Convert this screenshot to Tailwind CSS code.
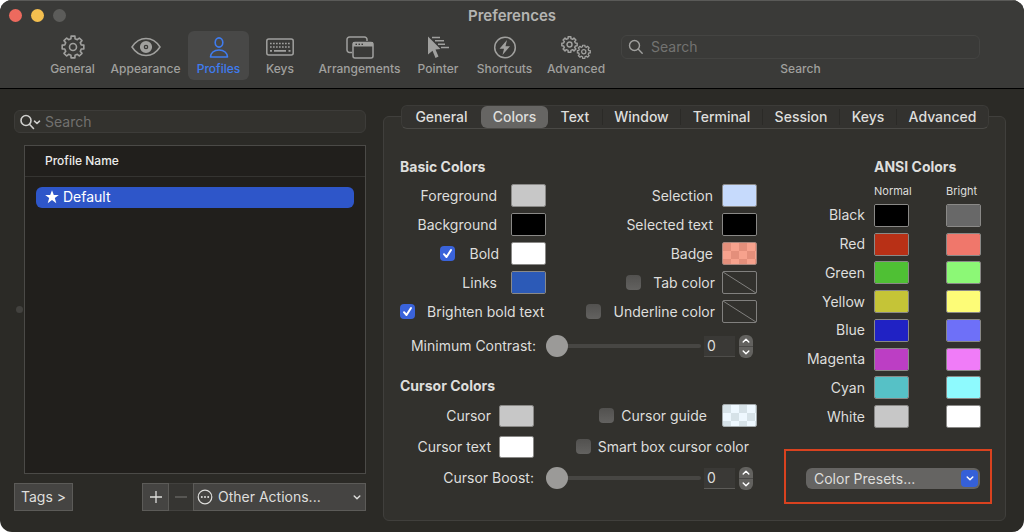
<!DOCTYPE html>
<html lang="en">
<head>
  <meta charset="UTF-8" />
  <meta name="viewport" content="width=device-width, initial-scale=1.0"/>
  <title>Preferences</title>
  <script src="https://cdn.jsdelivr.net/npm/@tailwindcss/browser@4"></script>
</head>
<body class="bg-white font-['Inter',sans-serif] text-sm text-[#dededc]">

  <!-- Shared icons -->
  <svg class="hidden">
    <symbol id="gear" viewBox="0 0 24 24">
      <path fill="none" stroke="currentColor" stroke-linejoin="round" d="M20.25 9.94L22.83 10.09V13.91L20.25 14.06L19.29 16.38L21.01 18.31L18.31 21.01L16.38 19.29L14.06 20.25L13.91 22.83H10.09L9.94 20.25L7.62 19.29L5.69 21.01L2.99 18.31L4.71 16.38L3.75 14.06L1.17 13.91V10.09L3.75 9.94L4.71 7.62L2.99 5.69L5.69 2.99L7.62 4.71L9.94 3.75L10.09 1.17H13.91L14.06 3.75L16.38 4.71L18.31 2.99L21.01 5.69L19.29 7.62Z"/>
      <circle cx="12" cy="12" r="3.5" fill="none" stroke="currentColor"/>
    </symbol>
    <symbol id="check" viewBox="0 0 15 15">
      <path fill="none" stroke="#fff" stroke-width="2" stroke-linecap="round" stroke-linejoin="round" d="M4 8.2L6.5 11L11 4"/>
    </symbol>
    <symbol id="chevron" viewBox="0 0 10 6">
      <path fill="none" stroke="currentColor" stroke-width="1.8" stroke-linecap="round" stroke-linejoin="round" d="M1.5 1.2L5 4.6L8.5 1.2"/>
    </symbol>
  </svg>

  <div class="flex min-h-screen flex-col overflow-hidden rounded-xl bg-[#2b2a26]">

    <!-- Title bar and toolbar -->
    <header class="border-b border-black border-t border-t-[#5a5a58] bg-[#3a3a38] pb-2 text-[#a0a09e]">
      <div class="relative flex h-[30px] items-center justify-center">
        <div class="absolute left-[9px] top-2 flex gap-[9px]">
          <button aria-label="Close" class="size-[13px] rounded-full bg-[#ed6a5e]"></button>
          <button aria-label="Minimize" class="size-[13px] rounded-full bg-[#f4bf4f]"></button>
          <button aria-label="Zoom" class="size-[13px] rounded-full bg-[#5c5c5a]"></button>
        </div>
        <h1 class="text-[15px] font-semibold text-[#b4b4b2]">Preferences</h1>
      </div>

      <div class="grid grid-cols-[61px_85px_61px_62px_97px_60px_73px_70px_1fr] pl-[42px] pr-11 text-xs font-medium">
        <button class="flex h-[49px] flex-col items-center pt-1">
          <svg class="size-6" stroke-width="1.6"><use href="#gear"/></svg>
          <span class="mt-0.5">General</span>
        </button>
        <button class="flex h-[49px] flex-col items-center pt-1">
          <svg class="h-6 w-[30px]" viewBox="0 0 30 24" fill="none" stroke="currentColor" stroke-width="1.5">
            <path d="M1 12C4.500 6.500 9.500 3.500 15 3.500S25.500 6.500 29 12C25.500 17.500 20.500 20.500 15 20.500S4.500 17.500 1 12Z"/>
            <circle cx="15" cy="12" r="4.200" stroke-width="3.800"/>
            <circle cx="15" cy="12" r="1" fill="currentColor" stroke="none"/>
          </svg>
          <span class="mt-0.5">Appearance</span>
        </button>
        <button class="flex h-[49px] flex-col items-center rounded-md bg-[#484847] pt-1 text-[#3f7cf0]" aria-current="page">
          <svg class="size-6" viewBox="0 0 24 24" fill="none" stroke="currentColor" stroke-width="1.6">
            <ellipse cx="12" cy="7.500" rx="3.800" ry="4.600"/>
            <path stroke-linejoin="round" d="M3.500 22C3.500 18 7 15 12 15S20.500 18 20.500 22Z"/>
          </svg>
          <span class="mt-0.5">Profiles</span>
        </button>
        <button class="flex h-[49px] flex-col items-center pt-1">
          <svg class="h-6 w-[28px]" viewBox="0 0 28 24" fill="none" stroke="currentColor" stroke-width="1.5">
            <rect x="0.800" y="4" width="26.400" height="16" rx="2"/>
            <path stroke-width="1.700" stroke-dasharray="1.700 1.300" d="M4 8.500H24.500M4 12H24.500"/>
            <path stroke-width="1.700" d="M4 15.800H6M8 15.800H20M22.500 15.800H24.500"/>
          </svg>
          <span class="mt-0.5">Keys</span>
        </button>
        <button class="flex h-[49px] flex-col items-center pt-1">
          <svg class="h-6 w-[28px]" viewBox="0 0 28 24" fill="none" stroke="currentColor" stroke-width="1.5">
            <path d="M6 17.500H3.500A2.500 2.500 0 0 1 1 15V4.500A2.500 2.500 0 0 1 3.500 2H18.500A2.500 2.500 0 0 1 21 4.500V6"/>
            <rect x="7" y="7.500" width="20" height="15.500" rx="2"/>
            <path fill="currentColor" stroke="none" fill-rule="evenodd" d="M7 7H27V11.500H7ZM9.500 8.500V10H11V8.500ZM12.500 8.500V10H14V8.500ZM15.500 8.500V10H17V8.500Z"/>
          </svg>
          <span class="mt-0.5">Arrangements</span>
        </button>
        <button class="flex h-[49px] flex-col items-center pt-1">
          <svg class="h-6 w-[24px]" viewBox="0 0 24 24" fill="currentColor">
            <path d="M2 1.500L14.500 14L9.500 14.500L12.500 21.500L9.500 23L6.500 15.800L2 19.500Z"/>
            <path fill="none" stroke="currentColor" stroke-width="1.500" d="M6 2.500H14M9 5.800H18M12 9.200H19M15 12.500H23"/>
          </svg>
          <span class="mt-0.5">Pointer</span>
        </button>
        <button class="flex h-[49px] flex-col items-center pt-1">
          <svg class="size-6" viewBox="0 0 24 24" fill="none" stroke="currentColor" stroke-width="1.5">
            <circle cx="12" cy="12.500" r="10.300"/>
            <path fill="currentColor" stroke="none" d="M14 5L6.500 13.700H11L9.500 20L17 11.300H12.500Z"/>
          </svg>
          <span class="mt-0.5">Shortcuts</span>
        </button>
        <button class="flex h-[49px] flex-col items-center pt-1">
          <svg class="h-6 w-[32px]" viewBox="0 0 32 24" stroke-width="2.1">
            <use href="#gear" x="1" y="1" width="17" height="17"/>
            <use href="#gear" x="16.500" y="9.500" width="14.500" height="14.500"/>
          </svg>
          <span class="mt-0.5">Advanced</span>
        </button>

        <div class="flex flex-col items-center pl-[10px] pt-1">
          <div class="flex h-6 w-full items-center gap-[7px] rounded-md border border-[#444442] px-1.5">
            <svg class="size-4 shrink-0" viewBox="0 0 16 16" fill="none" stroke="currentColor" stroke-width="1.4" stroke-linecap="round">
              <circle cx="6.500" cy="6.500" r="5"/><path d="M10.300 10.300L14.200 14.200"/>
            </svg>
            <input id="prefSearch" type="search" placeholder="Search" class="w-full bg-transparent text-sm font-normal outline-none placeholder:text-[#737371]" />
          </div>
          <label for="prefSearch" class="mt-0.5">Search</label>
        </div>
      </div>
    </header>

    <main class="flex flex-1 gap-[17px] pb-[11px] pl-[14px] pr-[18px]">

      <!-- Profile list -->
      <section class="relative flex w-[352px] shrink-0 flex-col pt-[21px]">
        <div class="flex h-[23px] items-center rounded-md border border-[#3d3c39] bg-[#33322e] px-1">
          <svg class="h-4 w-[22px] shrink-0 text-[#cfcfcd]" viewBox="0 0 22 16" fill="none" stroke="currentColor" stroke-width="1.6" stroke-linecap="round" stroke-linejoin="round">
            <circle cx="7" cy="6.500" r="5"/><path d="M10.700 10.500L14.500 14.500M15.500 7.200L18 9.500L20.500 7.200"/>
          </svg>
          <input type="search" aria-label="Search profiles" placeholder="Search" class="ml-1 w-full bg-transparent outline-none placeholder:text-[#72716f]" />
        </div>

        <div class="ml-[10px] mt-3 flex-1 border border-[#4b4a47] bg-[#211f1c]">
          <table class="w-full text-left">
            <thead>
              <tr><th class="h-[30px] border-b border-[#353431] pl-5 text-xs font-medium text-[#ececea]">Profile Name</th></tr>
            </thead>
            <tbody>
              <tr>
                <td class="px-[11px] pt-[10px]">
                  <div class="flex h-[21px] items-center gap-1 rounded-md bg-[#2e56c9] px-[9px] text-white">
                    <svg class="size-[14px]" viewBox="0 0 14 14" fill="currentColor"><path d="M7 .3L8.800 5H13.800L9.800 8.100L11.300 13.200L7 10.100L2.700 13.200L4.200 8.100L.2 5H5.200Z"/></svg>
                    Default
                  </div>
                </td>
              </tr>
            </tbody>
          </table>
        </div>
        <span class="absolute left-[2px] top-[217px] size-[7px] rounded-full bg-[#42413e]"></span>

        <div class="mb-[10px] mt-[9px] flex h-7">
          <button class="w-[59px] border border-[#5c5b58] bg-[#454442]">Tags &gt;</button>
          <button aria-label="Add profile" class="ml-auto flex w-[27px] items-center justify-center border border-[#5c5b58] bg-[#454442]">
            <svg class="size-3" viewBox="0 0 12 12" fill="none" stroke="currentColor" stroke-width="1.3"><path d="M6 0V12M0 6H12"/></svg>
          </button>
          <button aria-label="Remove profile" disabled class="flex w-6 items-center justify-center border-y border-[#42413e] bg-[#363532] text-[#6a6967]">
            <svg class="size-3" viewBox="0 0 12 12" fill="none" stroke="currentColor" stroke-width="1.3"><path d="M0 6H12"/></svg>
          </button>
          <div class="relative w-[173px]">
            <select aria-label="Other Actions" class="size-full appearance-none border border-[#5c5b58] bg-[#454442] pl-6 outline-none">
              <option>Other Actions...</option>
            </select>
            <svg class="pointer-events-none absolute left-1 top-[6px] size-4" viewBox="0 0 16 16" fill="none" stroke="currentColor" stroke-width="1.2">
              <circle cx="8" cy="8" r="6.800"/>
              <path stroke-width="2" stroke-linecap="round" d="M4.800 8H4.810M8 8H8.010M11.200 8H11.210"/>
            </svg>
            <svg class="pointer-events-none absolute right-[5px] top-3 h-[5px] w-2"><use href="#chevron"/></svg>
          </div>
        </div>
      </section>

      <!-- Profile settings -->
      <section class="mt-[27px] flex flex-1 flex-col rounded-md border border-[#403f3c] bg-[#32312d]">
        <nav class="-mt-3 ml-[17px] mr-4 grid h-6 grid-cols-[79fr_67fr_54fr_78fr_82fr_77fr_57fr_92fr] items-center rounded-md border border-[#3c3b38] border-b-[#4a4946] bg-[#33322f] font-medium leading-4">
          <button>General</button>
          <button class="h-[22px] rounded-md bg-[#666563]" aria-current="page">Colors</button>
          <button>Text</button>
          <button class="border-l border-[#2b2a27]">Window</button>
          <button class="border-l border-[#2b2a27]">Terminal</button>
          <button class="border-l border-[#2b2a27]">Session</button>
          <button class="border-l border-[#2b2a27]">Keys</button>
          <button class="border-l border-[#2b2a27]">Advanced</button>
        </nav>

        <div class="flex justify-between pb-4 pl-4 pr-[13px] pt-7">
          <div class="w-[357px]">
            <h2 class="h-5 font-bold">Basic Colors</h2>
            <div class="mt-1 flex justify-between">
              <div class="w-[146px]">
                <div class="flex h-[29px] items-center justify-end gap-[14px]">
                  <label for="fg">Foreground</label>
                  <input id="fg" type="color" value="#c7c7c7" class="h-[23px] w-[35px] appearance-none rounded-xs border border-[#8a8987] [&::-webkit-color-swatch-wrapper]:p-0 [&::-webkit-color-swatch]:border-0" />
                </div>
                <div class="flex h-[29px] items-center justify-end gap-[14px]">
                  <label for="bg">Background</label>
                  <input id="bg" type="color" value="#000000" class="h-[23px] w-[35px] appearance-none rounded-xs border border-[#8a8987] [&::-webkit-color-swatch-wrapper]:p-0 [&::-webkit-color-swatch]:border-0" />
                </div>
                <div class="flex h-[29px] items-center justify-end gap-3">
                  <label class="flex items-center gap-[14px]">
                    <span class="relative size-[15px]">
                      <input type="checkbox" checked class="block size-[15px] appearance-none rounded-sm bg-[#3a63da]" />
                      <svg class="pointer-events-none absolute inset-0 size-[15px]"><use href="#check"/></svg>
                    </span>
                    Bold
                  </label>
                  <input aria-label="Bold color" type="color" value="#ffffff" class="h-[23px] w-[35px] appearance-none rounded-xs border border-[#8a8987] [&::-webkit-color-swatch-wrapper]:p-0 [&::-webkit-color-swatch]:border-0" />
                </div>
                <div class="flex h-[29px] items-center justify-end gap-[14px]">
                  <label for="links">Links</label>
                  <input id="links" type="color" value="#2c5ab7" class="h-[23px] w-[35px] appearance-none rounded-xs border border-[#8a8987] [&::-webkit-color-swatch-wrapper]:p-0 [&::-webkit-color-swatch]:border-0" />
                </div>
                <label class="flex h-[29px] items-center gap-3 whitespace-nowrap">
                  <span class="relative size-[15px]">
                    <input type="checkbox" checked class="block size-[15px] appearance-none rounded-sm bg-[#3a63da]" />
                    <svg class="pointer-events-none absolute inset-0 size-[15px]"><use href="#check"/></svg>
                  </span>
                  Brighten bold text
                </label>
              </div>

              <div>
                <div class="flex h-[29px] items-center justify-end gap-[9px]">
                  <label for="selection">Selection</label>
                  <input id="selection" type="color" value="#c6dafc" class="h-[23px] w-[35px] appearance-none rounded-xs border border-[#8a8987] [&::-webkit-color-swatch-wrapper]:p-0 [&::-webkit-color-swatch]:border-0" />
                </div>
                <div class="flex h-[29px] items-center justify-end gap-[9px]">
                  <label for="selectedText">Selected text</label>
                  <input id="selectedText" type="color" value="#000000" class="h-[23px] w-[35px] appearance-none rounded-xs border border-[#8a8987] [&::-webkit-color-swatch-wrapper]:p-0 [&::-webkit-color-swatch]:border-0" />
                </div>
                <div class="flex h-[29px] items-center justify-end gap-[9px]">
                  <label for="badge">Badge</label>
                  <button id="badge" class="h-[23px] w-[35px] rounded-xs border border-[#a8867d] bg-[repeating-conic-gradient(#f7a28d_0_25%,#e48f7b_0_50%)] bg-size-[16px_16px]"></button>
                </div>
                <div class="flex h-[29px] items-center justify-end gap-[7px]">
                  <label class="flex items-center gap-3">
                    <input type="checkbox" class="size-[15px] appearance-none rounded-sm bg-linear-to-b from-[#52514f] to-[#636260]" />
                    Tab color
                  </label>
                  <button aria-label="Choose tab color" class="h-[23px] w-[35px] rounded-xs border border-[#81807e]">
                    <svg class="size-full" viewBox="0 0 33 21" preserveAspectRatio="none" stroke="#81807e"><path d="M0 0L33 21"/></svg>
                  </button>
                </div>
                <div class="flex h-[29px] items-center justify-end gap-[7px]">
                  <label class="flex items-center gap-3">
                    <input type="checkbox" class="size-[15px] appearance-none rounded-sm bg-linear-to-b from-[#52514f] to-[#636260]" />
                    Underline color
                  </label>
                  <button aria-label="Choose underline color" class="h-[23px] w-[35px] rounded-xs border border-[#81807e]">
                    <svg class="size-full" viewBox="0 0 33 21" preserveAspectRatio="none" stroke="#81807e"><path d="M0 0L33 21"/></svg>
                  </button>
                </div>
              </div>
            </div>

            <div class="mt-1 flex h-8 items-center justify-end pr-1">
              <label for="contrast">Minimum Contrast:</label>
              <input id="contrast" type="range" min="0" max="100" value="0" class="ml-[10px] h-[22px] w-[155px] appearance-none bg-transparent [&::-webkit-slider-runnable-track]:h-1 [&::-webkit-slider-runnable-track]:rounded-full [&::-webkit-slider-runnable-track]:bg-[#474643] [&::-webkit-slider-thumb]:-mt-[9px] [&::-webkit-slider-thumb]:size-[22px] [&::-webkit-slider-thumb]:appearance-none [&::-webkit-slider-thumb]:rounded-full [&::-webkit-slider-thumb]:bg-[#9b9a98]" />
              <input aria-label="Minimum Contrast value" value="0" class="ml-[3px] h-[21px] w-[31px] border-b border-[#4e4d4a] bg-[#3a3936] pl-[3px] outline-none" />
              <div class="ml-1 flex h-[23px] w-[14px] flex-col divide-y divide-[#4c4b49] overflow-hidden rounded-md bg-[#63625f] text-white">
                <button aria-label="Increase" class="flex flex-1 items-center justify-center"><svg class="h-[5px] w-2 rotate-180"><use href="#chevron"/></svg></button>
                <button aria-label="Decrease" class="flex flex-1 items-center justify-center"><svg class="h-[5px] w-2"><use href="#chevron"/></svg></button>
              </div>
            </div>

            <h2 class="mt-3.5 h-5 font-bold">Cursor Colors</h2>
            <div class="mt-1 flex justify-between">
              <div class="w-[134px]">
                <div class="flex h-[31px] items-center justify-end gap-2">
                  <label for="cursor">Cursor</label>
                  <input id="cursor" type="color" value="#c7c7c7" class="h-[22px] w-[35px] appearance-none rounded-xs border border-[#8a8987] [&::-webkit-color-swatch-wrapper]:p-0 [&::-webkit-color-swatch]:border-0" />
                </div>
                <div class="flex h-[31px] items-center justify-end gap-2">
                  <label for="cursorText">Cursor text</label>
                  <input id="cursorText" type="color" value="#ffffff" class="h-[22px] w-[35px] appearance-none rounded-xs border border-[#8a8987] [&::-webkit-color-swatch-wrapper]:p-0 [&::-webkit-color-swatch]:border-0" />
                </div>
              </div>
              <div>
                <div class="flex h-[31px] items-center justify-end gap-[15px]">
                  <label class="flex items-center gap-[7px]">
                    <input type="checkbox" class="size-[15px] appearance-none rounded-sm bg-linear-to-b from-[#52514f] to-[#636260]" />
                    Cursor guide
                  </label>
                  <button aria-label="Choose cursor guide color" class="h-[23px] w-[35px] rounded-xs border border-[#a3a9ab] bg-[repeating-conic-gradient(#eef8ff_0_25%,#d6e2e8_0_50%)] bg-size-[16px_16px]"></button>
                </div>
                <label class="flex h-[31px] items-center justify-end gap-[7px] pr-2">
                  <input type="checkbox" class="size-[15px] appearance-none rounded-sm bg-linear-to-b from-[#52514f] to-[#636260]" />
                  Smart box cursor color
                </label>
              </div>
            </div>

            <div class="flex h-8 items-center justify-end pr-1">
              <label for="boost">Cursor Boost:</label>
              <input id="boost" type="range" min="0" max="100" value="0" class="ml-3 h-[22px] w-[155px] appearance-none bg-transparent [&::-webkit-slider-runnable-track]:h-1 [&::-webkit-slider-runnable-track]:rounded-full [&::-webkit-slider-runnable-track]:bg-[#474643] [&::-webkit-slider-thumb]:-mt-[9px] [&::-webkit-slider-thumb]:size-[22px] [&::-webkit-slider-thumb]:appearance-none [&::-webkit-slider-thumb]:rounded-full [&::-webkit-slider-thumb]:bg-[#9b9a98]" />
              <input aria-label="Cursor Boost value" value="0" class="ml-[3px] h-[21px] w-[31px] border-b border-[#5c5b58] bg-[#3a3936] pl-[3px] outline-none" />
              <div class="ml-1 flex h-[23px] w-[14px] flex-col divide-y divide-[#4c4b49] overflow-hidden rounded-md bg-[#63625f] text-white">
                <button aria-label="Increase" class="flex flex-1 items-center justify-center"><svg class="h-[5px] w-2 rotate-180"><use href="#chevron"/></svg></button>
                <button aria-label="Decrease" class="flex flex-1 items-center justify-center"><svg class="h-[5px] w-2"><use href="#chevron"/></svg></button>
              </div>
            </div>
          </div>

          <!-- ANSI palette -->
          <div class="w-[208px]">
            <h2 class="h-5 pl-[90px] font-bold">ANSI Colors</h2>
            <table class="h-[254px] w-full table-fixed">
              <thead>
                <tr class="h-6 text-left text-[11px]">
                  <td class="w-[90px]"></td>
                  <th class="w-[72px] pt-1.5 font-normal">Normal</th>
                  <th class="pt-1.5 font-normal">Bright</th>
                </tr>
              </thead>
              <tbody id="ansiRows"></tbody>
            </table>

            <div class="mt-[18px] border-2 border-[#d9421f] pb-[13px] pl-5 pr-[10px] pt-[17px]">
              <div class="relative">
                <select aria-label="Color Presets" class="block h-[21px] w-full appearance-none rounded-md bg-[#656462] pl-2 leading-5 outline-none">
                  <option>Color Presets...</option>
                </select>
                <span class="pointer-events-none absolute right-0.5 top-0.5 flex size-[17px] items-center justify-center rounded-sm bg-[#3560d8] text-white">
                  <svg class="h-[5px] w-2"><use href="#chevron"/></svg>
                </span>
              </div>
            </div>
          </div>
        </div>
      </section>
    </main>
  </div>

  <script>
    const ansiColors = [
      ["Black", "#000000", "#686868"],
      ["Red", "#b83016", "#f0776b"],
      ["Green", "#4fc034", "#8cf876"],
      ["Yellow", "#c5c437", "#fdfc77"],
      ["Blue", "#2022c4", "#6e70f8"],
      ["Magenta", "#bc3ec4", "#f07cf8"],
      ["Cyan", "#56c1c6", "#8efafe"],
      ["White", "#c7c7c7", "#ffffff"],
    ];

    const well = (label, color) =>
      `<input type="color" aria-label="${label}" value="${color}" class="block h-[23px] w-[35px] appearance-none rounded-xs border border-[#8a8987] [&::-webkit-color-swatch-wrapper]:p-0 [&::-webkit-color-swatch]:border-0" />`;

    document.getElementById("ansiRows").innerHTML = ansiColors.map(([name, normal, bright]) => `
      <tr>
        <th class="pr-[9px] text-right font-normal">${name}</th>
        <td>${well(name + " normal", normal)}</td>
        <td>${well(name + " bright", bright)}</td>
      </tr>
    `).join("");
  </script>
</body>
</html>
